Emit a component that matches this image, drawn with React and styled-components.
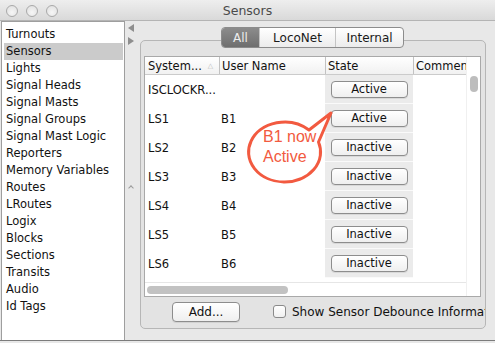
import * as React from "react";
import styled, {createGlobalStyle, css} from "styled-components";

//Global page setup

const GlobalStyle = createGlobalStyle`
  html, body {
    margin: 0;
    padding: 0;
    background: #e8e8e8;
  }
  * {
    box-sizing: border-box;
  }
`;

const UI_FONT = `"DejaVu Sans", "Liberation Sans", sans-serif`;

const Window = styled.div`
  position: relative;
  width: 495px;
  height: 343px;
  display: flex;
  flex-direction: column;
  background: #e8e8e8;
  font-family: ${UI_FONT};
  font-size: 11.5px;
  color: #111;
  overflow: hidden;
`;

const TitleBar = styled.header`
  height: 21px;
  display: grid;
  grid-template-columns: 1fr auto 1fr;
  align-items: center;
  background: linear-gradient(#eeeeee, #d9d9d9);
  border-bottom: 1px solid #b4b4b4;
`;

const Lights = styled.div`
  display: flex;
  gap: 8px;
  padding-left: 6px;
  padding-top: 1px;
`;

const Light = styled.span`
  width: 12px;
  height: 12px;
  border-radius: 50%;
  border: 1px solid #a9a9a9;
  background: radial-gradient(circle at 50% 65%, #f6f6f6, #dedede);
`;

const Title = styled.div`
  color: #4a4a4a;
  font-size: 12.5px;
  padding-top: 1px;
`;

const Body = styled.div`
  flex: 1;
  display: flex;
  min-height: 0;
  border-bottom: 1px solid #7c7c7c;
  margin-bottom: 2px;
`;

const NavList = styled.ul`
  list-style: none;
  flex-shrink: 0;
  margin: 0 0 0 1px;
  padding: 4px 1px 0 2px;
  width: 124px;
  background: #fff;
  border: 1px solid #9e9e9e;
  border-bottom: none;
`;

const NavItem = styled.li`
  height: 17px;
  line-height: 17px;
  padding-left: 2px;
  white-space: nowrap;
  ${props => props.selected && css`
    background: #cbcbcb;
  `}
`;

const Divider = styled.div`
  width: 15px;
  flex-shrink: 0;
  display: flex;
  flex-direction: column;
  gap: 5px;
  padding: 3px 0 0 3px;
`;

const Grip = styled.div`
  margin-top: 136px;
  width: 4px;
  height: 4px;
  border-left: 1px solid #9a9a9a;
  border-top: 1px solid #9a9a9a;
  transform: rotate(45deg);
  margin-left: 1px;
`;

const RightPane = styled.div`
  flex: 1;
  min-width: 0;
  display: flex;
  flex-direction: column;
  padding: 6px 9px 11px 0;
`;

const Tabs = styled.div`
  position: relative;
  z-index: 1;
  align-self: center;
  display: flex;
  height: 21px;
  margin-left: -1px;
  border: 1px solid #8c8c8c;
  border-radius: 4px;
  background: linear-gradient(#ffffff, #ececec);
  overflow: hidden;
`;

const Tab = styled.div`
  width: ${props => props.width}px;
  display: flex;
  align-items: center;
  justify-content: center;
  font-size: 12px;
  color: #1a1a1a;
  & + & {
    border-left: 1px solid #c4c4c4;
  }
  ${props => props.active && css`
    background: linear-gradient(#8c8c8c, #6e6e6e);
    color: #ededed;
    border-left: none;
  `}
  ${props => props.afterActive && css`
    && {
      border-left: 1px solid #6a6a6a;
    }
  `}
`;

const GroupBox = styled.section`
  flex: 1;
  min-width: 0;
  margin-top: -8px;
  display: flex;
  flex-direction: column;
  border: 1px solid #b6b6b6;
  border-radius: 5px;
  background: #e3e3e3;
  padding: 15px 4px 0 3px;
  overflow: hidden;
`;

const TablePanel = styled.div`
  height: 241px;
  display: flex;
  border: 1px solid #a9a9a9;
  background: #fff;
`;

const TableMain = styled.div`
  width: 321px;
  flex-shrink: 0;
  display: flex;
  flex-direction: column;
  overflow: hidden;
`;

const HeaderRow = styled.div`
  display: flex;
  height: 18px;
  background: linear-gradient(#ffffff, #f1f1f1);
  border-bottom: 1px solid #cbcbcb;
`;

const HeaderCell = styled.div`
  width: ${props => props.width}px;
  flex-shrink: 0;
  display: flex;
  align-items: center;
  padding-left: 3px;
  white-space: nowrap;
  overflow: hidden;
  & + & {
    border-left: 1px solid #c2c2c2;
    padding-left: 2px;
  }
`;

const SortMark = styled.span`
  font-size: 7px;
  color: #b8b8b8;
  margin-left: 6px;
`;

const Rows = styled.div`
  flex: 1;
  overflow: hidden;
`;

const Row = styled.div`
  display: flex;
  height: 29px;
`;

const Cell = styled.div`
  width: ${props => props.width}px;
  flex-shrink: 0;
  display: flex;
  align-items: center;
  padding-left: ${props => props.pad || 3}px;
  white-space: nowrap;
  ${props => props.shaded && css`
    background: #ebebeb;
    border-bottom: 1px solid #fafafa;
    justify-content: center;
    padding-left: 0;
  `}
`;

const PushButton = styled.button`
  width: ${props => props.width || 77}px;
  height: ${props => props.height || 17}px;
  flex-shrink: 0;
  padding: 0;
  border: 1px solid #8d8d8d;
  border-radius: 4px;
  background: linear-gradient(#ffffff, #efefef);
  box-shadow: 0 1px 0 rgba(0, 0, 0, 0.08);
  font-family: ${UI_FONT};
  font-size: ${props => props.size || 11.5}px;
  color: #111;
`;

const HScroll = styled.div`
  height: 14px;
  border-top: 1px solid #e6e6e6;
  padding: 3px 0 0 2px;
`;

const HThumb = styled.div`
  width: 141px;
  height: 8px;
  border-radius: 4px;
  background: #c2c2c2;
`;

const VScroll = styled.div`
  width: 14px;
  flex-shrink: 0;
  border-left: 1px solid #f0f0f0;
  padding: 19px 0 0 3px;
`;

const VThumb = styled.div`
  width: 8px;
  height: 16px;
  border-radius: 4px;
  background: #bdbdbd;
`;

const BottomBar = styled.div`
  display: flex;
  align-items: center;
  height: 29px;
  padding-left: 28px;
  white-space: nowrap;
`;

const CheckLabel = styled.label`
  display: flex;
  align-items: center;
  gap: 6px;
  margin-left: 33px;
  font-size: 12px;
`;

const CheckBox = styled.span`
  width: 13px;
  height: 13px;
  flex-shrink: 0;
  border: 1px solid #8a8a8a;
  border-radius: 3px;
  background: linear-gradient(#ffffff, #f0f0f0);
`;

const Callout = styled.div`
  position: absolute;
  left: 240px;
  top: 104px;
  width: 95px;
  height: 90px;
`;

const CalloutText = styled.div`
  position: absolute;
  left: 23px;
  top: 23px;
  font-family: "Liberation Sans", Arial, sans-serif;
  font-size: 16px;
  line-height: 20px;
  color: #f25a40;
`;

const navItems = [
    "Turnouts", "Sensors", "Lights", "Signal Heads", "Signal Masts", "Signal Groups",
    "Signal Mast Logic", "Reporters", "Memory Variables", "Routes", "LRoutes", "Logix",
    "Blocks", "Sections", "Transits", "Audio", "Id Tags"
];

const sensors = [
    {system: "ISCLOCKR...", user: "", state: "Active"},
    {system: "LS1", user: "B1", state: "Active"},
    {system: "LS2", user: "B2", state: "Inactive"},
    {system: "LS3", user: "B3", state: "Inactive"},
    {system: "LS4", user: "B4", state: "Inactive"},
    {system: "LS5", user: "B5", state: "Inactive"},
    {system: "LS6", user: "B6", state: "Inactive"},
];

const cols = [74, 106, 88, 53];

function Arrow({dir}) {
    return (
        <svg width="6" height="8" viewBox="0 0 6 8">
            {dir === "left"
                ? <polygon points="6,0 6,8 0,4" fill="#8e8e8e"/>
                : <polygon points="0,0 0,8 6,4" fill="#8e8e8e"/>}
        </svg>
    );
}

function App() {
    return (
        <Window>
            <GlobalStyle/>
            <TitleBar>
                <Lights>
                    <Light/><Light/><Light/>
                </Lights>
                <Title>Sensors</Title>
                <div/>
            </TitleBar>

            <Body>
                <NavList>
                    {navItems.map(item =>
                        <NavItem key={item} selected={item === "Sensors"}>{item}</NavItem>
                    )}
                </NavList>

                <Divider>
                    <Arrow dir="left"/>
                    <Arrow dir="right"/>
                    <Grip/>
                </Divider>

                <RightPane>
                    <Tabs>
                        <Tab width={37} active>All</Tab>
                        <Tab width={76} afterActive>LocoNet</Tab>
                        <Tab width={68}>Internal</Tab>
                    </Tabs>

                    <GroupBox>
                        <TablePanel>
                            <TableMain>
                                <HeaderRow>
                                    <HeaderCell width={cols[0]}>System...<SortMark>△</SortMark></HeaderCell>
                                    <HeaderCell width={cols[1]}>User Name</HeaderCell>
                                    <HeaderCell width={cols[2]}>State</HeaderCell>
                                    <HeaderCell width={cols[3]}>Comment</HeaderCell>
                                </HeaderRow>
                                <Rows>
                                    {sensors.map(s =>
                                        <Row key={s.system}>
                                            <Cell width={cols[0]}>{s.system}</Cell>
                                            <Cell width={cols[1]} pad={2}>{s.user}</Cell>
                                            <Cell width={cols[2]} shaded><PushButton>{s.state}</PushButton></Cell>
                                            <Cell width={cols[3]}/>
                                        </Row>
                                    )}
                                </Rows>
                                <HScroll><HThumb/></HScroll>
                            </TableMain>
                            <VScroll><VThumb/></VScroll>
                        </TablePanel>

                        <BottomBar>
                            <PushButton width={68} height={20} size={12}>Add...</PushButton>
                            <CheckLabel>
                                <CheckBox/>
                                Show Sensor Debounce Information
                            </CheckLabel>
                        </BottomBar>
                    </GroupBox>
                </RightPane>
            </Body>

            <Callout>
                <svg width="95" height="90" viewBox="0 0 95 90">
                    <path d="M 78.5 38 A 36 30 0 1 1 69 26 L 91 9 Z"
                          fill="#fff" stroke="#f25a40" strokeWidth="3" strokeLinejoin="round"/>
                </svg>
                <CalloutText>B1 now<br/>Active</CalloutText>
            </Callout>
        </Window>
    );
}

export default App;
